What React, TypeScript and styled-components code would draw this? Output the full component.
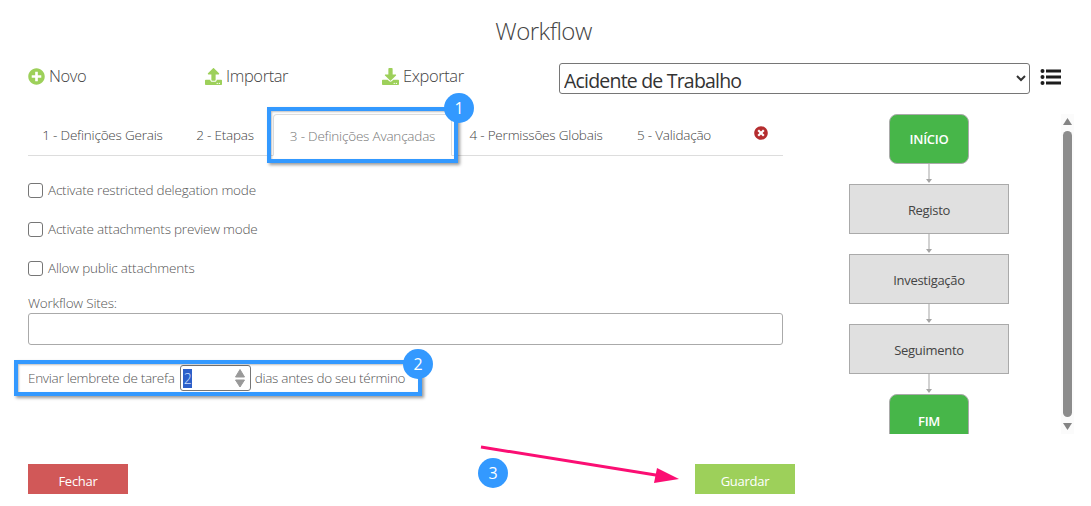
import React from "react";
import styled, { createGlobalStyle } from "styled-components";
import { FaPlusCircle, FaUpload, FaDownload, FaTimesCircle } from "react-icons/fa";

const GlobalStyle = createGlobalStyle`
  html, body {
    margin: 0;
    background: #fff;
    font-family: "Open Sans", "Noto Sans", sans-serif;
    color: #555;
  }
  * { box-sizing: border-box; }
`;

const Page = styled.div`
  position: relative;
  width: 1091px;
  height: 506px;
  overflow: hidden;
  padding: 0 17px 0 28px;
`;

const Title = styled.h1`
  margin: 0;
  height: 63px;
  padding-top: 14px;
  padding-right: 15px;
  text-align: center;
  font-size: 24px;
  line-height: 34px;
  font-weight: 300;
  letter-spacing: -0.5px;
  color: #444;
`;

const Toolbar = styled.div`
  display: flex;
  align-items: center;
  height: 31px;
`;

const ToolItem = styled.div`
  display: flex;
  align-items: center;
  gap: 4px;
  width: 177px;
  height: 26px;
  margin-top: -7px;
  font-size: 16.5px;
  font-weight: 300;
  letter-spacing: -0.4px;
  color: #444;
  svg { color: #9dd05a; font-size: 17px; margin-top: 2px; }
`;

const FlowSelect = styled.select`
  width: 471px;
  height: 31px;
  padding: 2px 0 0 0;
  border: 1px solid #767676;
  border-radius: 3px;
  background: #fff;
  font-family: inherit;
  font-size: 19.5px;
  letter-spacing: -0.8px;
  color: #333;
`;

const ListIcon = styled.svg`
  flex: none;
  width: 21px;
  height: 18px;
  margin: -3px 0 0 10px;
  color: #1c1c1c;
`;

const Body = styled.div`
  display: flex;
  margin-top: 20px;
  height: 320px;
`;

const LeftColumn = styled.div`
  flex: none;
  width: 755px;
`;

const Tabs = styled.div`
  display: flex;
  height: 42px;
  border-bottom: 1px solid #ddd;
`;

const Tab = styled.div<{ $active?: boolean; $w: number }>`
  position: relative;
  z-index: ${(p) => (p.$active ? 2 : 1)};
  flex: none;
  width: ${(p) => p.$w}px;
  height: ${(p) => (p.$active ? 42 : 41)}px;
  padding-top: 11px;
  text-align: center;
  font-size: 13.5px;
  line-height: 20px;
  font-weight: 300;
  letter-spacing: -0.2px;
  color: ${(p) => (p.$active ? "#777" : "#444")};
  background: #fff;
  ${(p) => p.$active && "border: 1px solid #ddd; border-bottom-color: #fff; border-radius: 4px 4px 0 0;"}
`;

const CloseTab = styled.div`
  display: flex;
  margin: 12px 0 0 26px;
  font-size: 14px;
  color: #b52d2f;
`;

const Highlight = styled.div<{ $t: number; $r: number; $b: number; $l: number }>`
  position: absolute;
  top: ${(p) => p.$t}px;
  right: ${(p) => p.$r}px;
  bottom: ${(p) => p.$b}px;
  left: ${(p) => p.$l}px;
  border: 4px solid #3399ff;
  box-shadow: 2px 2px 3px rgba(0, 0, 0, 0.4), inset 1px 1px 2px rgba(0, 0, 0, 0.25);
  pointer-events: none;
`;

const Badge = styled.div`
  position: absolute;
  display: flex;
  align-items: center;
  justify-content: center;
  width: 30px;
  height: 30px;
  border-radius: 50%;
  background: #3399ff;
  color: #fff;
  font-size: 16px;
  font-weight: 400;
`;

const TabBadge = styled(Badge)`
  top: -22px;
  right: -23px;
`;

const RowBadge = styled(Badge)`
  top: -16px;
  right: 350px;
`;

const CheckRow = styled.label`
  display: flex;
  align-items: center;
  gap: 5px;
  height: 20px;
  margin-top: 19px;
  font-size: 13.5px;
  font-weight: 300;
  letter-spacing: -0.2px;
  color: #555;
  &:first-of-type { margin-top: 24px; }
`;

const CheckBox = styled.span`
  flex: none;
  width: 15px;
  height: 15px;
  border: 1px solid #767676;
  border-radius: 3px;
  background: #fff;
`;

const FieldLabel = styled.div`
  margin-top: 16px;
  height: 18px;
  font-size: 13.5px;
  line-height: 18px;
  font-weight: 300;
  letter-spacing: -0.2px;
  color: #555;
`;

const SitesInput = styled.div`
  height: 32px;
  margin-top: 1px;
  border: 1px solid #aaa;
  border-radius: 3px;
`;

const ReminderRow = styled.div`
  position: relative;
  display: flex;
  align-items: center;
  gap: 4px;
  height: 26px;
  margin-top: 20px;
  font-size: 13.5px;
  font-weight: 300;
  letter-spacing: -0.28px;
  color: #555;
`;

const NumberBox = styled.div`
  display: flex;
  align-items: center;
  justify-content: space-between;
  width: 71px;
  height: 26px;
  margin-left: 1px;
  padding: 0 5px 0 2px;
  border: 1px solid #767676;
  border-radius: 3px;
  background: #fff;
`;

const SelectedValue = styled.span`
  padding: 0 1px;
  line-height: 19px;
  background: #2c5fc9;
  color: #cfe0ff;
  font-size: 14px;
`;

const Spinner = styled.svg`
  width: 10px;
  height: 20px;
  color: #999;
`;

const Diagram = styled.div`
  flex: none;
  display: flex;
  flex-direction: column;
  align-items: center;
  width: 160px;
  height: 320px;
  margin-left: 66px;
  overflow: hidden;
`;

const NodeBox = styled.div<{ $terminal?: boolean }>`
  flex: none;
  display: flex;
  align-items: center;
  justify-content: center;
  width: ${(p) => (p.$terminal ? 80 : 160)}px;
  height: 50px;
  padding-top: ${(p) => (p.$terminal ? 0 : 2)}px;
  border: 1px solid #aaa;
  border-radius: ${(p) => (p.$terminal ? "8px" : "0")};
  background: ${(p) => (p.$terminal ? "#47b649" : "#e0e0e0")};
  color: ${(p) => (p.$terminal ? "#fff" : "#444")};
  font-size: 13px;
  font-weight: ${(p) => (p.$terminal ? 600 : 400)};
  letter-spacing: -0.3px;
`;

const EndNode = styled(NodeBox)`
  padding-top: 4px;
`;

const Connector = styled.svg`
  flex: none;
  display: block;
  width: 10px;
  height: 20px;
  color: #a5a5a5;
`;

const ScrollTrack = styled.div`
  flex: none;
  display: flex;
  flex-direction: column;
  align-items: center;
  width: 13px;
  height: 320px;
  margin-left: 52px;
  background: #fbfbfb;
`;

const ScrollArrow = styled.svg`
  flex: none;
  width: 9px;
  height: 17px;
  color: #848484;
`;

const ScrollThumb = styled.div`
  flex: 1;
  width: 9px;
  border-radius: 5px;
  background: #8c8c8c;
`;

const Footer = styled.div`
  display: flex;
  justify-content: space-between;
  width: 767px;
  margin-top: 30px;
`;

const ActionButton = styled.div<{ $bg: string }>`
  display: flex;
  align-items: center;
  justify-content: center;
  width: 100px;
  height: 30px;
  padding-top: 3px;
  background: ${(p) => p.$bg};
  color: #fff;
  font-size: 13px;
  letter-spacing: -0.25px;
`;

const FlowArrow = styled.svg`
  position: absolute;
  left: 475px;
  top: 440px;
  width: 210px;
  height: 50px;
`;

const ThirdBadge = styled(Badge)`
  left: 478px;
  top: 458px;
`;

const Arrow = () => (
  <Connector viewBox="0 0 10 20">
    <line x1="5" y1="0" x2="5" y2="16" stroke="currentColor" />
    <path d="M2 15h6l-3 4z" fill="currentColor" />
  </Connector>
);

export default function App() {
  return (
    <Page>
      <GlobalStyle />
      <Title>Workflow</Title>
      <Toolbar>
        <ToolItem><FaPlusCircle />Novo</ToolItem>
        <ToolItem><FaUpload />Importar</ToolItem>
        <ToolItem><FaDownload />Exportar</ToolItem>
        <FlowSelect defaultValue="a">
          <option value="a">Acidente de Trabalho</option>
        </FlowSelect>
        <ListIcon viewBox="0 0 21 18">
          <circle cx="2.500" cy="3" r="2" fill="currentColor" />
          <circle cx="2.500" cy="9" r="2" fill="currentColor" />
          <circle cx="2.500" cy="15" r="2" fill="currentColor" />
          <path d="M6 1.500h15v3H6zM6 7.500h15v3H6zM6 13.500h15v3H6z" fill="currentColor" />
        </ListIcon>
      </Toolbar>
      <Body>
        <LeftColumn>
          <Tabs>
            <Tab $w={149}>1 - Definições Gerais</Tab>
            <Tab $w={96}>2 - Etapas</Tab>
            <Tab $w={179} $active>
              3 - Definições Avançadas
              <Highlight $t={-8} $r={-7} $b={-8} $l={-7} />
              <TabBadge>1</TabBadge>
            </Tab>
            <Tab $w={168}>4 - Permissões Globais</Tab>
            <Tab $w={108}>5 - Validação</Tab>
            <CloseTab><FaTimesCircle /></CloseTab>
          </Tabs>
          <CheckRow><CheckBox />Activate restricted delegation mode</CheckRow>
          <CheckRow><CheckBox />Activate attachments preview mode</CheckRow>
          <CheckRow><CheckBox />Allow public attachments</CheckRow>
          <FieldLabel>Workflow Sites:</FieldLabel>
          <SitesInput />
          <ReminderRow>
            Enviar lembrete de tarefa
            <NumberBox>
              <SelectedValue>2</SelectedValue>
              <Spinner viewBox="0 0 10 20">
                <path d="M5 1.500l4.500 7.500H.5zM.5 12h9L5 19z" fill="currentColor" stroke="currentColor" strokeLinejoin="round" />
              </Spinner>
            </NumberBox>
            dias antes do seu término
            <Highlight $t={-5} $r={361} $b={-5} $l={-14} />
            <RowBadge>2</RowBadge>
          </ReminderRow>
        </LeftColumn>
        <Diagram>
          <NodeBox $terminal>INÍCIO</NodeBox>
          <Arrow />
          <NodeBox>Registo</NodeBox>
          <Arrow />
          <NodeBox>Investigação</NodeBox>
          <Arrow />
          <NodeBox>Seguimento</NodeBox>
          <Arrow />
          <EndNode $terminal>FIM</EndNode>
        </Diagram>
        <ScrollTrack>
          <ScrollArrow viewBox="0 0 9 17"><path d="M4.500 4l4.500 7H0z" fill="currentColor" /></ScrollArrow>
          <ScrollThumb />
          <ScrollArrow viewBox="0 0 9 17"><path d="M0 6h9l-4.500 7z" fill="currentColor" /></ScrollArrow>
        </ScrollTrack>
      </Body>
      <Footer>
        <ActionButton $bg="#d15858">Fechar</ActionButton>
        <ActionButton $bg="#9dd05a">Guardar</ActionButton>
      </Footer>
      <FlowArrow viewBox="0 0 210 50">
        <line x1="6" y1="7" x2="190" y2="36.500" stroke="#fb0e73" strokeWidth="3" />
        <path d="M204 39L182 28L179 43z" fill="#fb0e73" />
      </FlowArrow>
      <ThirdBadge>3</ThirdBadge>
    </Page>
  );
}
